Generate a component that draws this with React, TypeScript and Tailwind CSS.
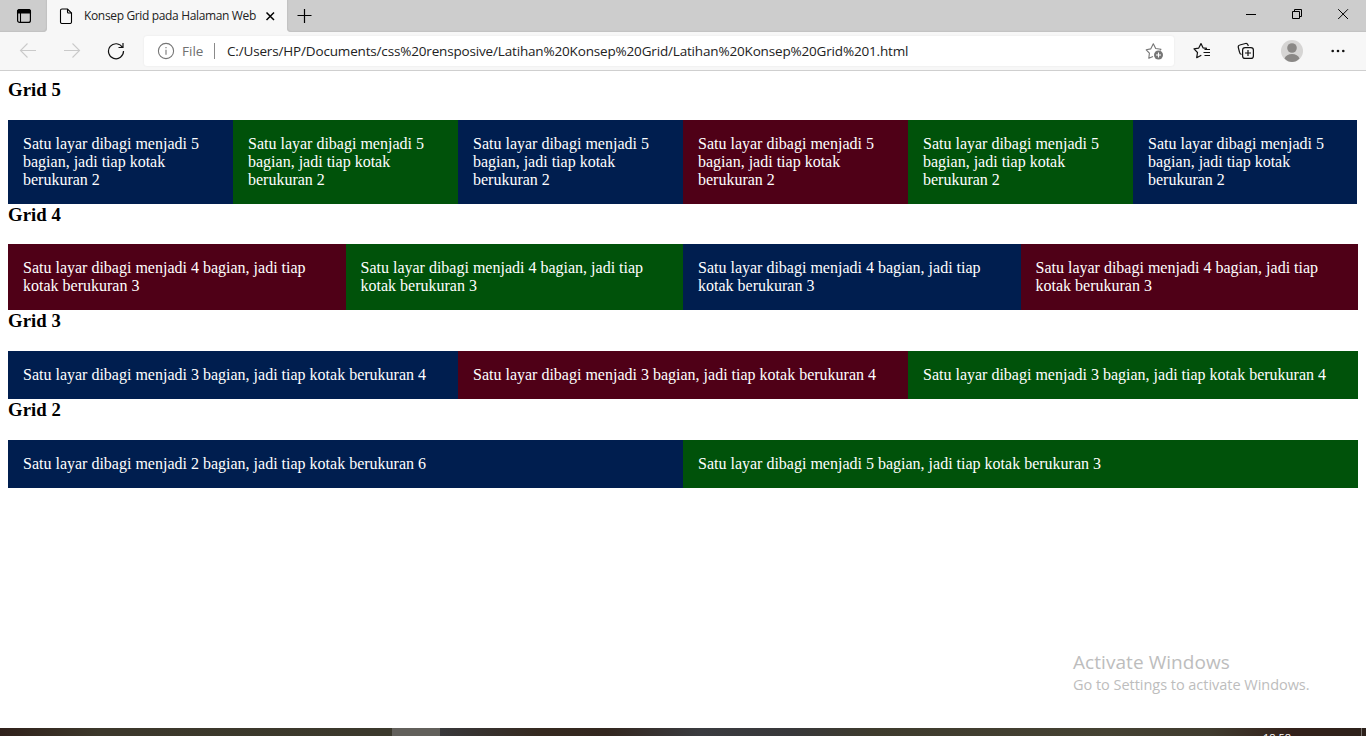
import type { ReactNode } from "react";

const NAVY = "bg-[#001e4f]";
const GREEN = "bg-[#00520a]";
const MAROON = "bg-[#4f0017]";

type Row = {
  title: string;
  text: string;
  heading: string;
  boxHeight: string;
  width: string;
  columns: string;
  colors: string[];
  lastText?: string;
};

const rows: Row[] = [
  {
    title: "Grid 5",
    text: "Satu layar dibagi menjadi 5 bagian, jadi tiap kotak berukuran 2",
    heading: "h-10 leading-[20px]",
    boxHeight: "h-[84px]",
    width: "w-[1349px]",
    columns: "grid-cols-[225px_225px_225px_225px_225px_224px]",
    colors: [NAVY, GREEN, NAVY, MAROON, GREEN, NAVY],
  },
  {
    title: "Grid 4",
    text: "Satu layar dibagi menjadi 4 bagian, jadi tiap kotak berukuran 3",
    heading: "h-10 leading-[22px]",
    boxHeight: "h-[66px]",
    width: "w-[1350px]",
    columns: "grid-cols-4",
    colors: [MAROON, GREEN, NAVY, MAROON],
  },
  {
    title: "Grid 3",
    text: "Satu layar dibagi menjadi 3 bagian, jadi tiap kotak berukuran 4",
    heading: "h-[41px] leading-[22px]",
    boxHeight: "h-12",
    width: "w-[1350px]",
    columns: "grid-cols-3",
    colors: [NAVY, MAROON, GREEN],
  },
  {
    title: "Grid 2",
    text: "Satu layar dibagi menjadi 2 bagian, jadi tiap kotak berukuran 6",
    lastText: "Satu layar dibagi menjadi 5 bagian, jadi tiap kotak berukuran 3",
    heading: "h-[41px] leading-[22px]",
    boxHeight: "h-12",
    width: "w-[1350px]",
    columns: "grid-cols-2",
    colors: [NAVY, GREEN],
  },
];

function Icon({ size, className = "", children }: { size: number; className?: string; children: ReactNode }) {
  return (
    <svg
      width={size}
      height={size}
      viewBox={`0 0 ${size} ${size}`}
      fill="none"
      stroke="currentColor"
      strokeWidth="1.1"
      className={`block shrink-0 ${className}`}
    >
      {children}
    </svg>
  );
}

function TabStrip() {
  return (
    <div className="flex h-8 bg-[#f7f7f7]">
      <div className="flex w-[47px] items-start rounded-br-[4px] bg-[#cdcdcd] pl-4 pt-2 shadow-[inset_-1px_-1px_1px_#c2c2c2]">
        <Icon size={16}>
          <rect x="1.6" y="1.6" width="12.8" height="12.8" rx="2" strokeWidth="1.2" />
          <path d="M1.5 3.5a2 2 0 0 1 2-2h9a2 2 0 0 1 2 2V5h-13z" fill="currentColor" />
          <path d="M4.5 5v9.5" />
        </Icon>
      </div>
      <div className="flex w-[240px] items-start pl-3">
        <Icon size={16} className="mt-2">
          <path d="M1.5 2.5a1.5 1.5 0 0 1 1.5-1.5H8.5L12.5 5V14a1.5 1.5 0 0 1-1.5 1.5H3A1.5 1.5 0 0 1 1.5 14z" />
          <path d="M8.5 1V4a1 1 0 0 0 1 1h3" />
        </Icon>
        <span className="ml-[9px] mt-[7px] w-[174px] whitespace-nowrap text-[12px] leading-[18px] tracking-[-0.35px] text-[#222]">
          Konsep Grid pada Halaman Web
        </span>
        <Icon size={16} className="mt-2 ml-1">
          <path d="M4.5 4.5l7.5 7.5M12 4.5l-7.5 7.5" strokeWidth="1.5" />
        </Icon>
      </div>
      <div className="flex flex-1 items-start rounded-bl-[4px] bg-[#cdcdcd] shadow-[inset_1px_-1px_1px_#c2c2c2]">
        <Icon size={16} className="ml-[9px] mt-2">
          <path d="M8.5 1v14M1.5 7.5H15.5" strokeWidth="1.2" />
        </Icon>
        <div className="ml-auto flex pt-[6px] pr-[15px] gap-[30px]">
          <Icon size={16}>
            <path d="M3 8.5h10" strokeWidth="1" />
          </Icon>
          <Icon size={16}>
            <path d="M3.5 5.5h7v7h-7zM5.5 5.5v-2h7v7h-2" strokeWidth="1" />
          </Icon>
          <Icon size={16}>
            <path d="M3.2 3.2l9.8 9.8M13 3.2L3.2 13" strokeWidth="1" />
          </Icon>
        </div>
      </div>
    </div>
  );
}

function Toolbar() {
  return (
    <div className="flex h-[39px] items-start border-b border-[#cfcfcf] bg-[#f7f7f7]">
      <Icon size={18} className="ml-[19px] mt-[9px] text-[#cacaca]">
        <path d="M17 9.5H1.5M8.5 2.5l-7 7 7 7" />
      </Icon>
      <Icon size={18} className="ml-[26px] mt-[9px] text-[#cacaca]">
        <path d="M1 9.5h15.5M9.5 2.5l7 7-7 7" />
      </Icon>
      <Icon size={18} className="ml-[26px] mt-[10px] text-[#111]">
        <path d="M15.5 5.5A7.5 7.5 0 1 0 16.5 9M16 1V5.5H11.5" strokeWidth="1.2" />
      </Icon>
      <div className="ml-[19px] mt-1 flex h-[30px] w-[1030px] items-center rounded-[3px] bg-white shadow-[0_0_2px_#e4e4e4]">
        <Icon size={18} className="ml-[13px] text-[#767676]">
          <circle cx="9" cy="9" r="7.6" />
          <path d="M9 7.8v5" />
          <path d="M9 5v1.3" />
        </Icon>
        <span className="ml-[7px] w-[24px] whitespace-nowrap text-[13.5px] leading-[18px] text-[#707070]">File</span>
        <span className="ml-[8px] h-4 w-px bg-[#8a8a8a]" />
        <span className="ml-3 whitespace-nowrap text-[13.5px] leading-[18px] tracking-[-0.165px] text-[#222]">
          C:/Users/HP/Documents/css%20rensposive/Latihan%20Konsep%20Grid/Latihan%20Konsep%20Grid%201.html
        </span>
        <Icon size={18} className="ml-auto mr-[11px] text-[#767676]">
          <path
            d="M8 14.5L3.8 16.3L4.4 11.2L1.2 7.8L5.7 6.9L8.3 1.8L10.7 6.5L16 7.2L15 8.3"
            strokeLinejoin="round"
          />
          <circle cx="13.5" cy="13" r="4.5" fill="currentColor" stroke="none" />
          <path d="M13.5 10.5v5M11 13h5" stroke="white" />
        </Icon>
      </div>
      <Icon size={18} className="ml-[19px] mt-[10px] text-[#111]">
        <path
          d="M11.5 6L10 5.8L8 1.6L5.6 6.2L1 6.8L4.5 10.5L3.7 15.7L8.3 13.2M10 5.8L14 6.3"
          strokeWidth="1.2"
          strokeLinejoin="round"
        />
        <path d="M11.5 7.5h5.5M10.5 10.5h6.5M11.5 13.5h5.5" strokeWidth="1.2" />
      </Icon>
      <Icon size={18} className="ml-[26px] mt-[10px] text-[#111]">
        <path d="M4.5 12.5A3 3 0 0 1 2.5 10L1.3 5.5A2 2 0 0 1 2.8 3L8.5 1.5A2 2 0 0 1 11 3L11.3 4" strokeWidth="1.2" />
        <rect x="5.6" y="5.6" width="10.8" height="10.8" rx="2.5" strokeWidth="1.2" />
        <path d="M11 8v6M8 11h6" strokeWidth="1.2" />
      </Icon>
      <Icon size={22} className="ml-[26px] mt-2">
        <circle cx="11" cy="11" r="11" fill="#d6d5d4" stroke="none" />
        <circle cx="11" cy="8" r="4.8" fill="#8a8886" stroke="none" />
        <path d="M3.5 18.5C4.5 15.5 7.5 14 11 14s6.5 1.5 7.5 4.5C16.5 21 13.5 22 11 22s-5.5-1-7.5-3.5z" fill="#8a8886" stroke="none" />
      </Icon>
      <Icon size={16} className="ml-[27px] mt-[11px] text-[#111]">
        <g fill="currentColor" stroke="none">
          <circle cx="2.7" cy="8" r="1.3" />
          <circle cx="8" cy="8" r="1.3" />
          <circle cx="13.3" cy="8" r="1.3" />
        </g>
      </Icon>
    </div>
  );
}

function GridRow({ row }: { row: Row }) {
  return (
    <section>
      <h3 className={`${row.heading} text-[18.72px] font-bold tracking-[0.1px] text-black`}>{row.title}</h3>
      <div className={`grid ${row.width} ${row.boxHeight} ${row.columns}`}>
        {row.colors.map((color, i) => (
          <div key={i} className={`${color} p-[15px] text-base leading-[18px] text-white`}>
            {row.lastText && i === row.colors.length - 1 ? row.lastText : row.text}
          </div>
        ))}
      </div>
    </section>
  );
}

export default function App() {
  return (
    <div className="relative flex h-[736px] w-[1366px] flex-col overflow-hidden bg-white font-['Open_Sans','Noto_Sans',sans-serif]">
      <TabStrip />
      <Toolbar />
      <main className="flex-1 px-2 pt-[9px] font-['Liberation_Serif',serif]">
        {rows.map((row) => (
          <GridRow key={row.title} row={row} />
        ))}
      </main>
      <footer className="flex h-2 shrink-0 overflow-hidden">
        <div className="w-[392px] bg-linear-to-r from-[#30211b] via-[#3c382b] via-25% to-[#3b392c]" />
        <div className="w-12 bg-[#62605b]" />
        <div className="flex flex-1 justify-end bg-[linear-gradient(90deg,#38383a_0%,#35291f_11%,#33271f_18%,#3a3b3f_28%,#38383a_38%,#3e3b2d_47%,#454233_72%,#403c2f_83%,#33211b_92%,#2d211b_100%)]">
          <span className="mr-[70px] mt-[3px] h-[14px] text-[11px] leading-[14px] text-white">18:58</span>
          <span className="mr-1 w-px bg-[#77716d]" />
        </div>
      </footer>
      <div className="absolute left-[1073px] top-[650px] whitespace-nowrap text-[#bdbdbd]">
        <p className="text-[19px] leading-6 tracking-[0.06px]">Activate Windows</p>
        <p className="text-[14.5px] leading-[22px] tracking-[-0.03px]">Go to Settings to activate Windows.</p>
      </div>
    </div>
  );
}
